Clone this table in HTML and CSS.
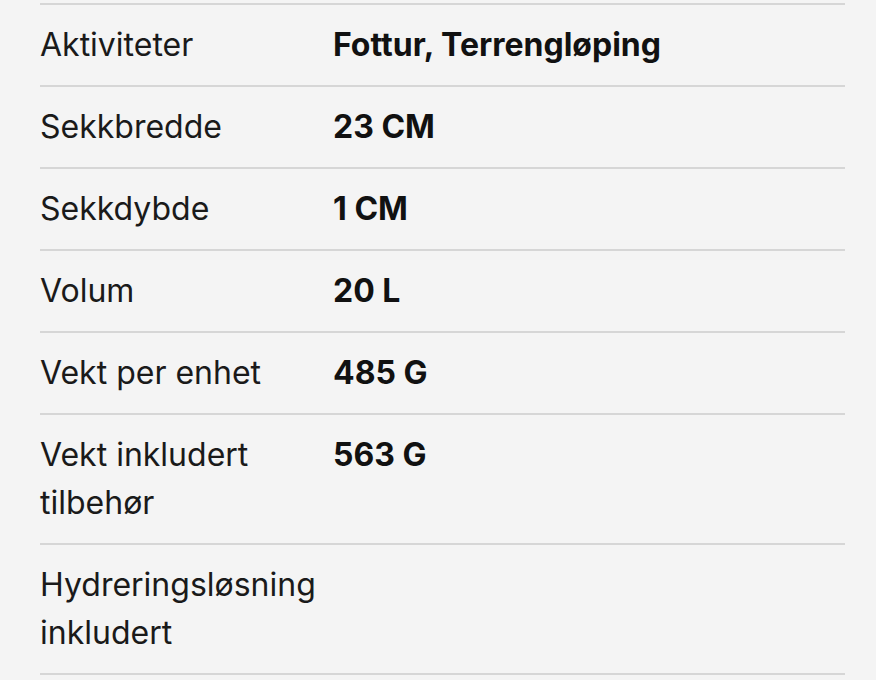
FILE: index.html
```html
<!DOCTYPE html>
<html lang="no">
<head>
<meta charset="utf-8">
<link rel="stylesheet" href="styles.css">
</head>
<body>
<div class="specs">
  <div class="row"><div class="label">Aktiviteter</div><div class="value">Fottur, Terrengløping</div></div>
  <div class="row"><div class="label">Sekkbredde</div><div class="value">23 CM</div></div>
  <div class="row"><div class="label">Sekkdybde</div><div class="value">1 CM</div></div>
  <div class="row"><div class="label">Volum</div><div class="value">20 L</div></div>
  <div class="row"><div class="label">Vekt per enhet</div><div class="value">485 G</div></div>
  <div class="row"><div class="label">Vekt inkludert tilbehør</div><div class="value">563 G</div></div>
  <div class="row"><div class="label">Hydreringsløsning inkludert</div><div class="value"></div></div>
</div>
</body>
</html>
```

FILE: styles.css
```css
html, body {
  margin: 0;
  padding: 0;
  background: #f4f4f4;
}
body {
  font-family: Inter, "Noto Sans", sans-serif;
  color: #1a1a1a;
  font-size: 32px;
  line-height: 48px;
}
.specs {
  padding: 3px 31px 0 40px;
}
.row {
  display: grid;
  grid-template-columns: 293px 1fr;
  border-top: 2px solid #d6d6d6;
  padding: 16px 0;
}
.row:last-child {
  border-bottom: 2px solid #d6d6d6;
}
.label {
  padding-right: 16px;
}
.value {
  font-weight: 700;
  color: #111;
}
```
